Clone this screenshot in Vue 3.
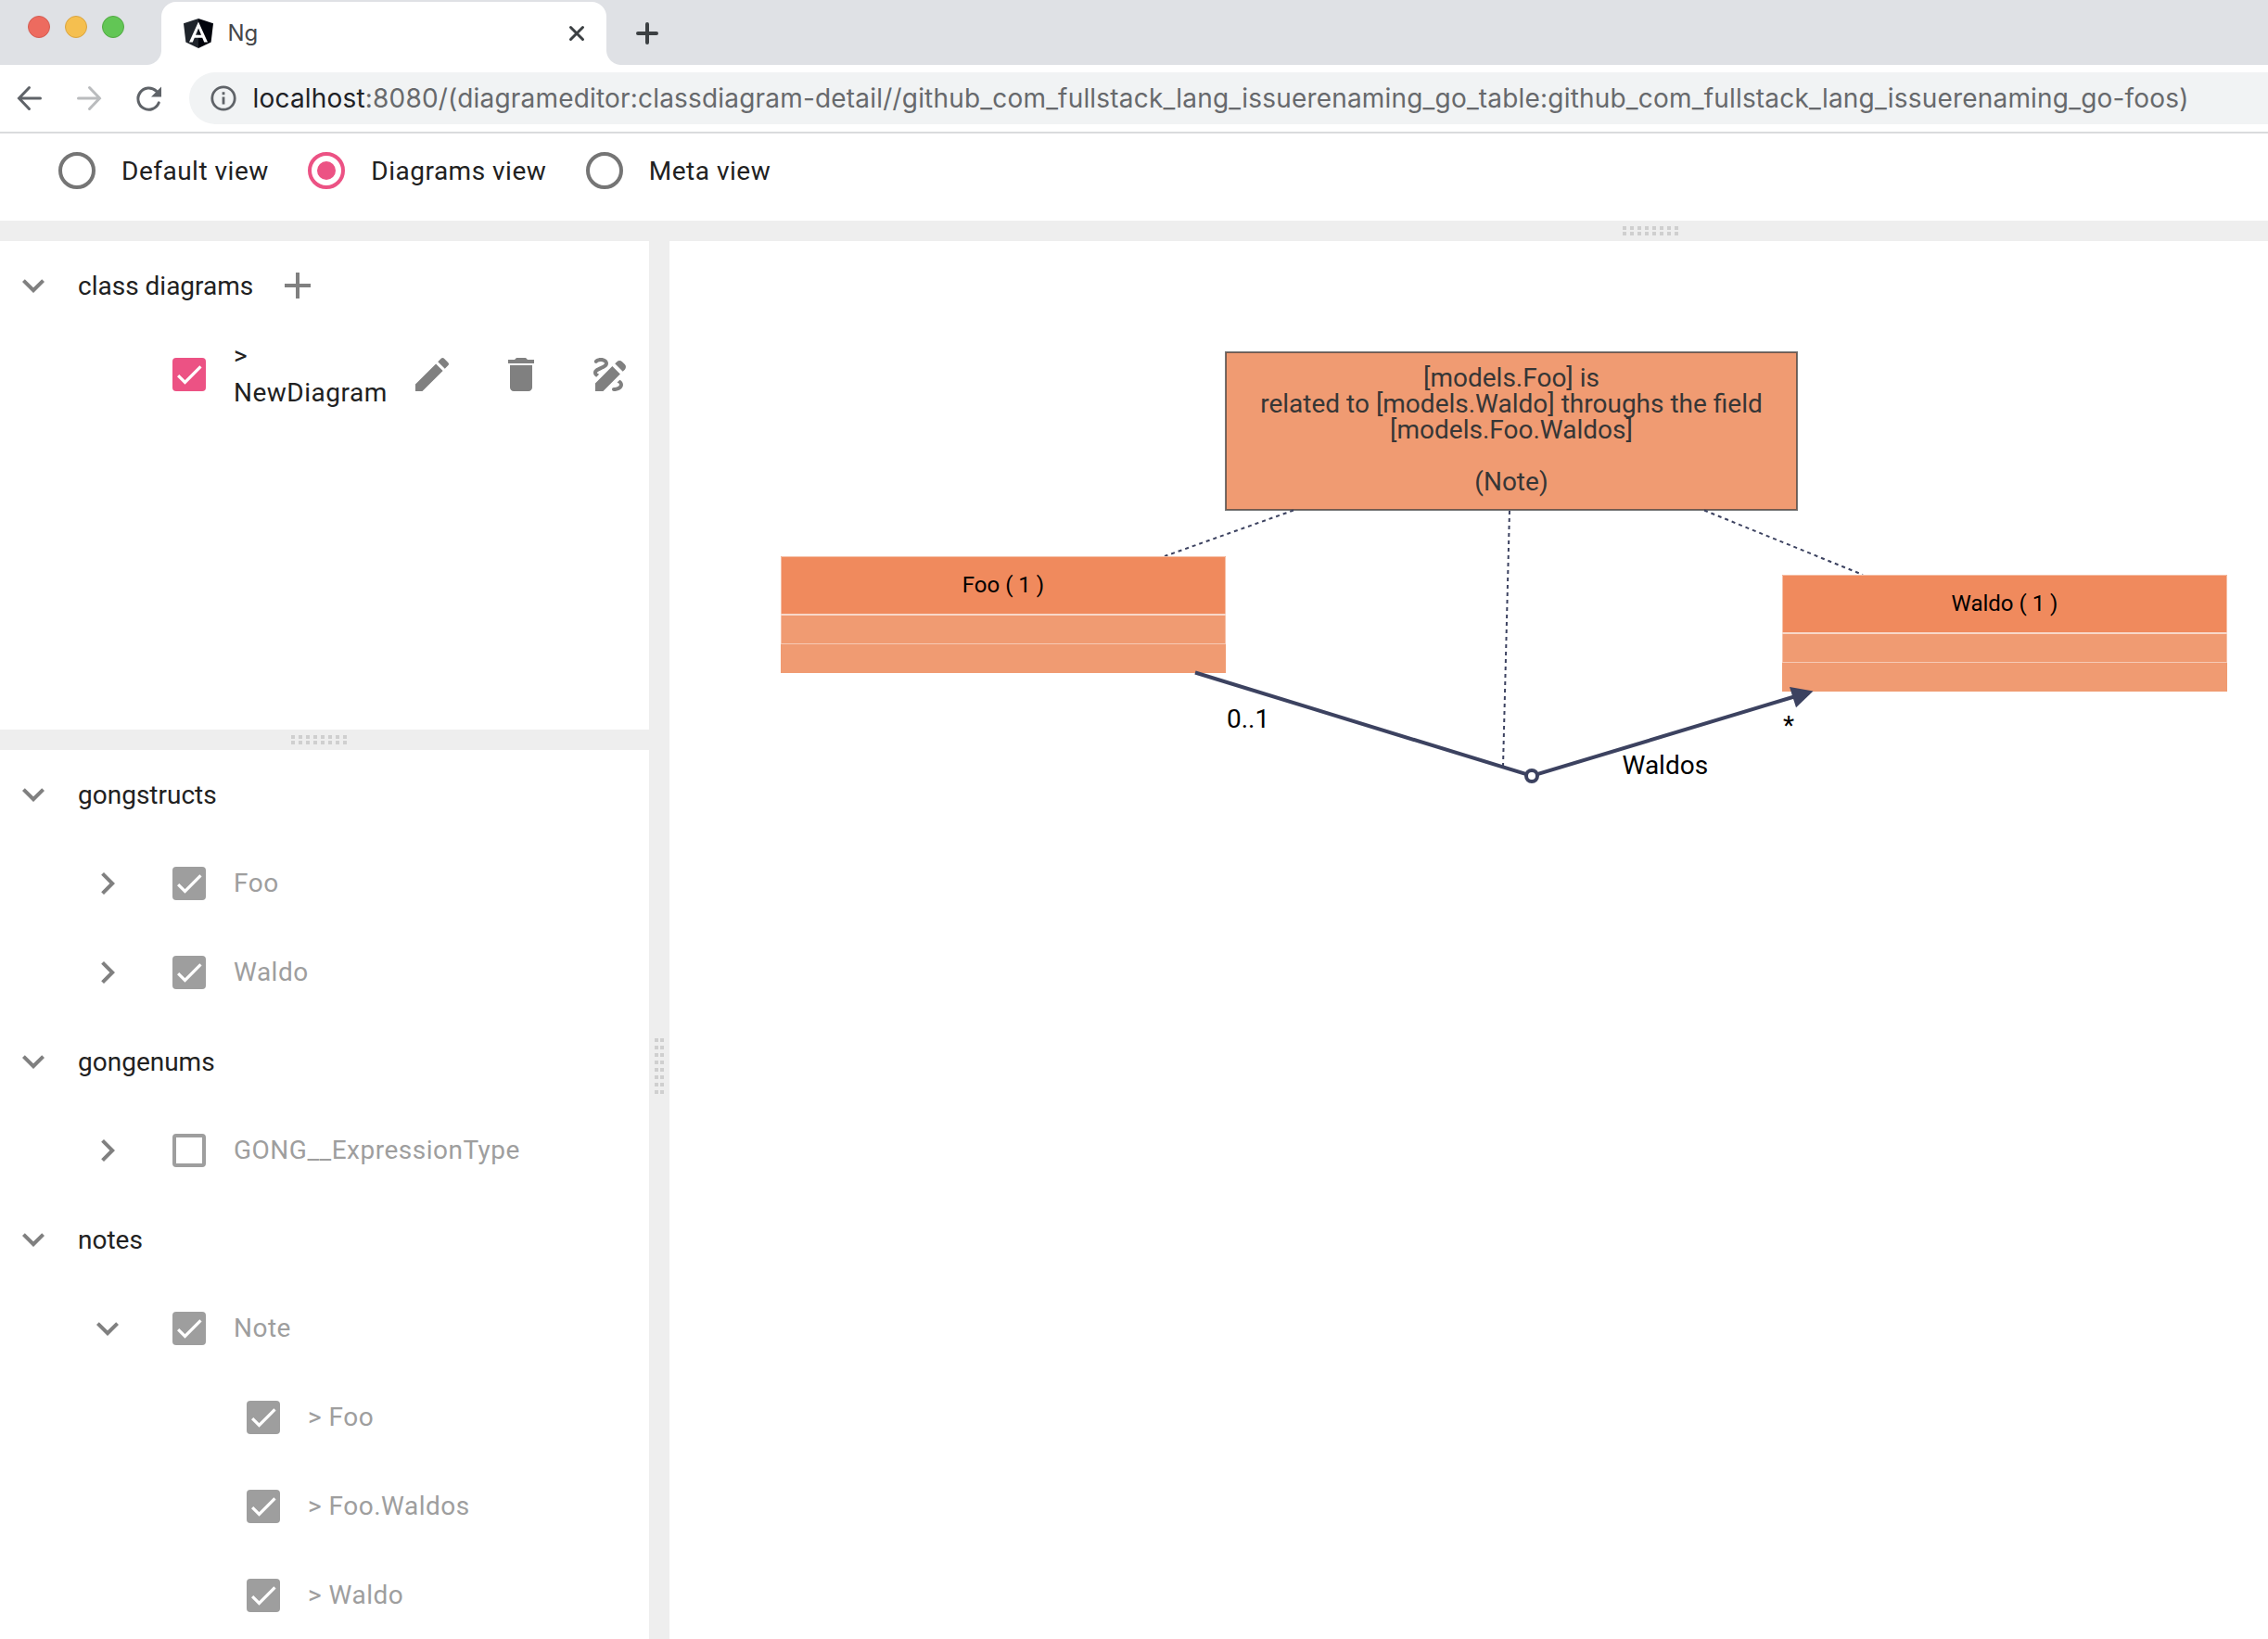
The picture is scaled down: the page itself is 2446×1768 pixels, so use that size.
<script setup>
const views = [
  { label: 'Default view', selected: false },
  { label: 'Diagrams view', selected: true },
  { label: 'Meta view', selected: false },
]

const structureTree = [
  { level: 0, label: 'gongstructs', open: true },
  { level: 1, label: 'Foo', open: false, checked: true },
  { level: 1, label: 'Waldo', open: false, checked: true },
  { level: 0, label: 'gongenums', open: true },
  { level: 1, label: 'GONG__ExpressionType', open: false, checked: false },
  { level: 0, label: 'notes', open: true },
  { level: 1, label: 'Note', open: true, checked: true },
  { level: 2, label: '> Foo', checked: true },
  { level: 2, label: '> Foo.Waldos', checked: true },
  { level: 2, label: '> Waldo', checked: true },
]

const shapes = [
  { name: 'Foo ( 1 )', x: 842, y: 600 },
  { name: 'Waldo ( 1 )', x: 1922, y: 620 },
]

const noteLines = [
  { text: '[models.Foo] is', y: 417 },
  { text: 'related to [models.Waldo] throughs the field', y: 445 },
  { text: '[models.Foo.Waldos]', y: 473 },
  { text: '(Note)', y: 529 },
]

const chevronDown = 'M16.59 8.59L12 13.17 7.41 8.59 6 10l6 6 6-6z'
const chevronRight = 'M10 6L8.59 7.41 13.17 12l-4.58 4.59L10 18l6-6z'
const tick = 'M4.1 12.7L9 17.6 20.3 6.3'
const actions = [
  'M3 17.25V21h3.75L17.81 9.94l-3.75-3.75L3 17.25zM20.71 7.04c.39-.39.39-1.02 0-1.41l-2.34-2.34c-.39-.39-1.02-.39-1.41 0l-1.83 1.83 3.75 3.75 1.83-1.83z',
  'M6 19c0 1.1.9 2 2 2h8c1.1 0 2-.9 2-2V7H6v12zM19 4h-3.5l-1-1h-5l-1 1H5v2h14V4z',
  'M18.85 10.39l1.06-1.06c.78-.78.78-2.05 0-2.83L18.5 5.09c-.78-.78-2.05-.78-2.83 0l-1.06 1.06 4.24 4.24zm-5.66-2.83L4 16.76V21h4.24l9.19-9.19-4.24-4.25zM19 17.5c0 2.19-2.54 3.5-5 3.5-.55 0-1-.45-1-1s.45-1 1-1c1.54 0 3-.73 3-1.5 0-.47-.48-.87-1.23-1.2l1.48-1.48c1.07.63 1.75 1.47 1.75 2.68zM4.58 13.35C3.61 12.79 3 12.06 3 11c0-1.8 1.89-2.63 3.56-3.36C7.59 7.18 9 6.56 9 6c0-.41-.78-1-2-1-1.26 0-1.8.61-1.83.64-.35.41-.98.46-1.4.12-.41-.34-.49-.95-.15-1.38C3.73 4.24 4.76 3 7 3s4 1.32 4 3c0 1.87-1.93 2.72-3.64 3.47C6.42 9.88 5 10.5 5 11c0 .31.43.6 1.07.86l-1.49 1.49z',
]
</script>

<template>
  <div class="window">
    <header class="tabstrip">
      <div class="lights">
        <i class="light red"></i><i class="light yellow"></i><i class="light green"></i>
      </div>
      <div class="tab">
        <svg class="favicon" viewBox="0 0 32 32">
          <path d="M16 0L0 5.3l2.4 20.2L16 32z" fill="#1f242b" />
          <path d="M16 0l16 5.3-2.4 20.2L16 32z" fill="#02040c" />
          <path d="M16 3.6L6 25.4h3.8l2-4.7h8.4l2 4.7H26zm0 7l3 7.1h-6z" fill="#fff" />
        </svg>
        <span class="tab-title">Ng</span>
        <svg class="tab-close" viewBox="0 0 20 20">
          <path d="M3.5 3.5l13 13M16.5 3.5l-13 13" />
        </svg>
      </div>
      <svg class="tab-new" viewBox="0 0 24 24"><path d="M12 2v20M2 12h20" /></svg>
    </header>

    <nav class="toolbar">
      <svg class="nav-icon" viewBox="0 0 32 32">
        <path d="M27.500 16H5M15.500 4.500L4.500 16l11 11.500" />
      </svg>
      <svg class="nav-icon faded" viewBox="0 0 32 32">
        <path d="M4.500 16h23M16.500 4.500L27.500 16l-11 11.500" />
      </svg>
      <svg class="nav-icon" viewBox="0 0 32 32">
        <path d="M27.300 20.800A11.600 11.600 0 1 1 24.500 8.200" />
        <path class="solid" d="M30 3.500v11H19z" />
      </svg>
      <div class="address">
        <svg class="info" viewBox="0 0 28 28">
          <circle cx="14" cy="14" r="12.200" />
          <path d="M14 12.500v8M14 7.300v3" />
        </svg>
        <span class="url"><b>localhost</b>:8080/(diagrameditor:classdiagram-detail//github_com_fullstack_lang_issuerenaming_go_table:github_com_fullstack_lang_issuerenaming_go-foos)</span>
      </div>
    </nav>

    <section class="views">
      <label v-for="v in views" :key="v.label" class="view">
        <i class="radio" :class="{ on: v.selected }"></i>
        <span>{{ v.label }}</span>
      </label>
    </section>

    <div class="gutter row-gutter top-gutter"><i class="grip"></i></div>

    <main class="split">
      <aside class="side">
        <div class="pane upper">
          <div class="node">
            <svg class="icon" viewBox="0 0 24 24"><path :d="chevronDown" /></svg>
            <span class="title">class diagrams</span>
            <svg class="icon add" viewBox="0 0 24 24"><path d="M19 13h-6v6h-2v-6H5v-2h6V5h2v6h6z" /></svg>
          </div>
          <div class="node level-1">
            <i class="spacer"></i>
            <span class="box checked accent"><svg viewBox="0 0 24 24"><path :d="tick" /></svg></span>
            <span class="label diagram-name">&gt;<br />NewDiagram</span>
            <div class="actions">
              <svg v-for="d in actions" :key="d" class="icon" viewBox="0 0 24 24"><path :d="d" /></svg>
            </div>
          </div>
        </div>
        <div class="gutter row-gutter"><i class="grip"></i></div>
        <div class="pane">
          <div v-for="n in structureTree" :key="n.level + n.label" class="node" :class="'level-' + n.level">
            <svg v-if="n.level < 2" class="icon" viewBox="0 0 24 24">
              <path :d="n.open ? chevronDown : chevronRight" />
            </svg>
            <i v-else class="spacer"></i>
            <span v-if="n.level === 0" class="title">{{ n.label }}</span>
            <template v-else>
              <span class="box" :class="{ checked: n.checked }">
                <svg v-if="n.checked" viewBox="0 0 24 24"><path :d="tick" /></svg>
              </span>
              <span class="label disabled">{{ n.label }}</span>
            </template>
          </div>
        </div>
      </aside>

      <div class="gutter col-gutter"><i class="grip upright"></i></div>

      <svg class="diagram" viewBox="722 260 1724 1508">
        <rect class="note" x="1322" y="380" width="616" height="170" />
        <text v-for="l in noteLines" :key="l.y" class="note-text" x="1630" :y="l.y">{{ l.text }}</text>

        <g class="note-links">
          <path d="M1395 550.500L1256 600" />
          <path d="M1628 551L1621 827" />
          <path d="M1838 550.500L2009 620" />
        </g>

        <g v-for="s in shapes" :key="s.name">
          <rect class="head" :x="s.x" :y="s.y" width="480" height="63" />
          <rect class="body" :x="s.x" :y="s.y + 63" width="480" height="63" />
          <path class="edge" :d="`M${s.x + 0.5} ${s.y + 94}V${s.y + 0.5}h479v93.500`" />
          <path class="rule strong" :d="`M${s.x} ${s.y + 63}h480`" />
          <path class="rule" :d="`M${s.x} ${s.y + 94.5}h480`" />
          <text class="shape-name" :x="s.x + 240" :y="s.y + 39">{{ s.name }}</text>
        </g>

        <path class="link" d="M1289 725.500L1652 837L1940 750" />
        <path class="arrow" d="M1955.500 745.500L1930 741l7 22.300z" />
        <circle class="joint" cx="1652" cy="837" r="6" />
        <text class="link-text" x="1323" y="785">0..1</text>
        <text class="link-text" x="1923" y="792">*</text>
        <text class="link-text" x="1749.500" y="835">Waldos</text>
      </svg>
    </main>
  </div>
</template>

<style>
body {
  background: #fff;
  overflow: hidden;
}
</style>

<style scoped>
.window {
  width: 2446px;
  height: 1768px;
  display: flex;
  flex-direction: column;
  overflow: hidden;
  background: #fff;
  font-family: Roboto, sans-serif;
  font-size: 28px;
  color: #212121;
}
.window * {
  box-sizing: border-box;
}
.tabstrip {
  height: 70px;
  flex: none;
  display: flex;
  background: #dfe1e5;
}
.lights {
  width: 174px;
  padding: 17px 0 0 30px;
  display: flex;
  gap: 16px;
}
.light {
  width: 24px;
  height: 24px;
  border-radius: 50%;
  border: 1px solid;
}
.red { background: #ed6b5f; border-color: #d35d53; }
.yellow { background: #f5bf4f; border-color: #d9a441; }
.green { background: #62c655; border-color: #52a943; }
.tab {
  position: relative;
  width: 480px;
  height: 68px;
  margin-top: 2px;
  padding: 0 22px 0 24px;
  border-radius: 16px 16px 0 0;
  background: #fff;
  display: flex;
  align-items: center;
}
.tab::before,
.tab::after {
  content: '';
  position: absolute;
  bottom: 0;
  width: 16px;
  height: 16px;
}
.tab::before {
  left: -16px;
  background: radial-gradient(circle at 0 0, transparent 15.5px, #fff 16.500px);
}
.tab::after {
  right: -16px;
  background: radial-gradient(circle at 100% 0, transparent 15.500px, #fff 16.500px);
}
.favicon {
  width: 32px;
  height: 32px;
}
.tab-title {
  flex: 1;
  margin-left: 15.500px;
  font: 24px/28px Inter, sans-serif;
  color: #45474a;
}
.tab-close,
.tab-new {
  fill: none;
  stroke: #3c4043;
  stroke-linecap: round;
}
.tab-close {
  width: 20px;
  height: 20px;
  stroke-width: 3;
}
.tab-new {
  width: 24px;
  height: 24px;
  margin: 24px 0 0 32px;
  stroke-width: 4;
}
.toolbar {
  height: 74px;
  flex: none;
  display: flex;
  align-items: center;
  gap: 32px;
  padding-left: 16px;
  border-bottom: 2px solid #dadbdd;
}
.nav-icon {
  flex: none;
  width: 32px;
  height: 32px;
  fill: none;
  stroke: #5f6368;
  stroke-width: 3;
  stroke-linecap: round;
}
.nav-icon.faded {
  stroke: #babcbe;
}
.nav-icon .solid {
  fill: #5f6368;
  stroke: none;
}
.address {
  flex: 1;
  height: 56px;
  margin-left: -4px;
  padding-left: 22.500px;
  border-radius: 28px 0 0 28px;
  background: #f1f3f4;
  display: flex;
  align-items: center;
}
.info {
  flex: none;
  width: 28px;
  height: 28px;
  fill: none;
  stroke: #5f6368;
  stroke-width: 2.800;
}
.url {
  margin-left: 18px;
  white-space: nowrap;
  font: 28px/40px Inter, sans-serif;
  letter-spacing: 0.190px;
  color: #67696c;
}
.url b {
  font-weight: 400;
  color: #202124;
}
.views {
  height: 94px;
  flex: none;
  padding: 20px 0 0 63px;
  display: flex;
  gap: 42.500px;
}
.view {
  height: 40px;
  display: flex;
  align-items: center;
  gap: 28px;
  letter-spacing: 0.500px;
}
.radio {
  width: 40px;
  height: 40px;
  border: 4px solid #757575;
  border-radius: 50%;
  display: flex;
}
.radio.on {
  border-color: #ec5284;
}
.radio.on::before {
  content: '';
  width: 20px;
  height: 20px;
  margin: auto;
  border-radius: 50%;
  background: #ec5284;
}
.gutter {
  flex: none;
  background: #eee;
  display: flex;
  align-items: center;
  justify-content: center;
}
.row-gutter {
  height: 22px;
}
.top-gutter {
  padding-left: 1114px;
}
.col-gutter {
  width: 22px;
  align-items: flex-start;
  padding-top: 860px;
}
.grip {
  width: 60px;
  height: 10px;
  background:
    repeating-linear-gradient(90deg, transparent 0 4px, #eee 4px 8px),
    linear-gradient(#cfcfcf 4px, #eee 4px 6px, #cfcfcf 6px);
}
.grip.upright {
  width: 10px;
  height: 60px;
  background:
    repeating-linear-gradient(transparent 0 4px, #eee 4px 8px),
    linear-gradient(90deg, #cfcfcf 4px, #eee 4px 6px, #cfcfcf 6px);
}
.split {
  flex: 1;
  display: flex;
  min-height: 0;
}
.side {
  width: 700px;
  flex: none;
  display: flex;
  flex-direction: column;
}
.side .row-gutter {
  padding-right: 12px;
}
.upper {
  height: 527px;
  flex: none;
}
.node {
  height: 96px;
  padding-left: 12px;
  display: flex;
  align-items: center;
}
.level-1 { padding-left: 92px; }
.level-2 { padding-left: 172px; }
.icon {
  flex: none;
  width: 48px;
  height: 48px;
  fill: #808080;
}
.spacer {
  width: 48px;
  flex: none;
}
.title {
  margin-left: 24px;
}
.add {
  margin-left: 24px;
}
.box {
  flex: none;
  width: 36px;
  height: 36px;
  margin: 0 30px 0 46px;
  border: 4px solid #9e9e9e;
  border-radius: 4px;
  display: flex;
}
.box.checked {
  border: 0;
  background: #9e9e9e;
}
.box.accent {
  background: #ec5284;
}
.box svg {
  width: 36px;
  height: 36px;
  fill: none;
  stroke: #fff;
  stroke-width: 2.130;
}
.label {
  line-height: 40px;
  letter-spacing: 0.500px;
  white-space: nowrap;
}
.disabled {
  color: #9e9e9e;
}
.diagram-name {
  width: 190px;
}
.actions {
  display: flex;
  gap: 48px;
}
.diagram {
  width: 1724px;
  height: 1508px;
  flex: none;
}
.note {
  fill: #f09b72;
  stroke: #3c3c3c;
  stroke-opacity: 0.700;
  stroke-width: 2;
}
.note-text {
  font-size: 28px;
  text-anchor: middle;
  fill: #363636;
}
.note-links {
  stroke: #3c4260;
  stroke-width: 2;
  stroke-dasharray: 4 4;
}
.head { fill: #f08a5d; }
.body { fill: #f09b72; }
.edge {
  fill: none;
  stroke: #f5bfa6;
}
.rule {
  stroke: #f6c9b4;
  stroke-width: 1;
}
.rule.strong {
  stroke: #f8d8c9;
  stroke-width: 2;
}
.shape-name {
  font-size: 24px;
  text-anchor: middle;
  fill: #000;
}
.link {
  fill: none;
  stroke: #3c4260;
  stroke-width: 4;
}
.arrow {
  fill: #3c4260;
}
.joint {
  fill: #fff;
  stroke: #3c4260;
  stroke-width: 4;
}
.link-text {
  font-size: 28px;
  fill: #000;
}
</style>
